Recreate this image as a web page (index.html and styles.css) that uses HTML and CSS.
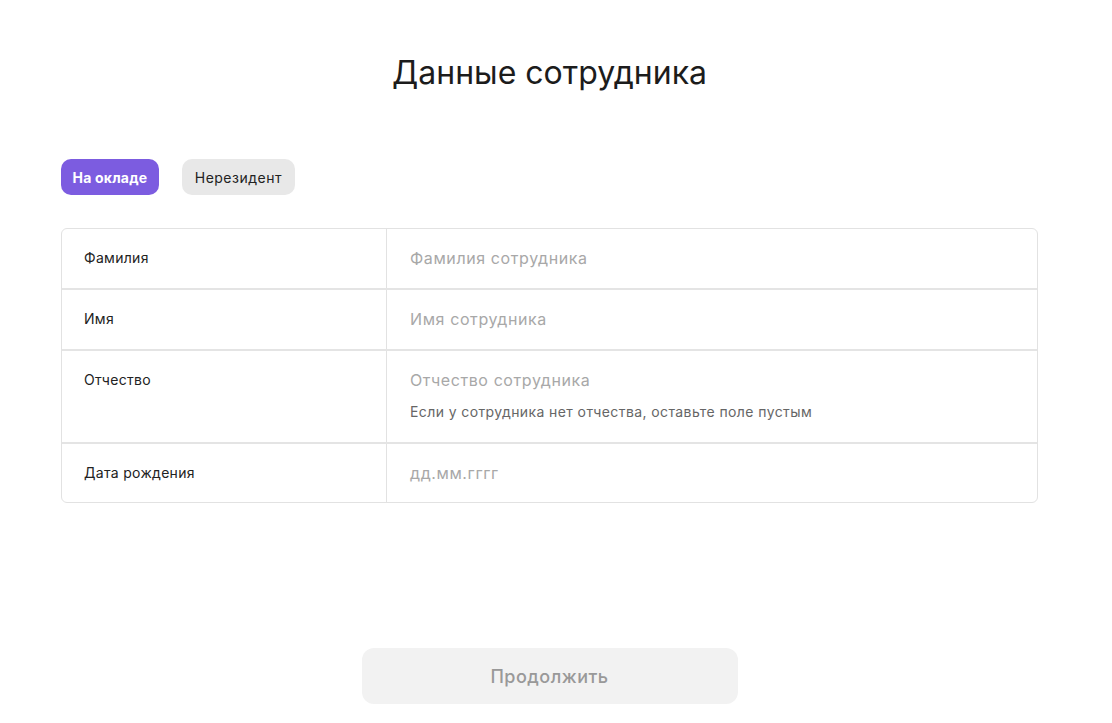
FILE: index.html
```html
<!DOCTYPE html>
<html lang="ru">
<head>
<meta charset="utf-8">
<link rel="stylesheet" href="styles.css">
</head>
<body>
<div class="page">
  <h1 class="title">Данные сотрудника</h1>
  <div class="tabs">
    <button class="tab tab-active">На окладе</button>
    <button class="tab">Нерезидент</button>
  </div>
  <div class="form">
    <div class="row">
      <div class="label">Фамилия</div>
      <div class="field"><div class="placeholder">Фамилия сотрудника</div></div>
    </div>
    <div class="row">
      <div class="label">Имя</div>
      <div class="field"><div class="placeholder">Имя сотрудника</div></div>
    </div>
    <div class="row">
      <div class="label">Отчество</div>
      <div class="field">
        <div class="placeholder">Отчество сотрудника</div>
        <div class="hint">Если у сотрудника нет отчества, оставьте поле пустым</div>
      </div>
    </div>
    <div class="row row-last">
      <div class="label">Дата рождения</div>
      <div class="field"><div class="placeholder">дд.мм.гггг</div></div>
    </div>
  </div>
  <div class="actions">
    <button class="continue">Продолжить</button>
  </div>
</div>
</body>
</html>
```

FILE: styles.css
```css
* { box-sizing: border-box; }
html, body { margin: 0; padding: 0; background: #fff; }
body { font-family: Inter, "Noto Sans", sans-serif; color: #222; }
.page { width: 1112px; height: 723px; padding: 0 74px 0 61px; display: flex; flex-direction: column; }
.title { margin: 51px 0 0; font-size: 32px; font-weight: 400; line-height: 44px; text-align: center; color: #1c1c1c; }
.tabs { display: flex; gap: 23px; margin-top: 64px; }
.tab { height: 36px; padding: 0 13px; border: none; border-radius: 10px; font-family: inherit; font-size: 14px; letter-spacing: 0.5px; background: #e8e8e8; color: #222; }
.tab-active { background: #7c5ce0; color: #fff; font-weight: 700; letter-spacing: 0.2px; padding: 0 11.5px; }
.form { margin-top: 33px; border: 1px solid #e2e2e2; border-radius: 6px; }
.row { display: flex; border-top: 2px solid #e4e4e4; }
.row:first-child { border-top: none; }
.label { width: 325px; flex: none; padding: 19px 22px; font-size: 14px; line-height: 20px; letter-spacing: 0.3px; border-right: 1px solid #e2e2e2; color: #222; }
.field { flex: 1; padding: 18px 23px 19px; }
.row-last .label { padding-bottom: 18px; }
.row-last .field { padding-bottom: 18px; }
.placeholder { font-size: 16px; line-height: 22px; letter-spacing: 0.6px; color: #a8a8a8; }
.hint { margin-top: 10px; font-size: 14px; line-height: 22px; letter-spacing: 0.4px; color: #666; }
.actions { margin-top: auto; margin-bottom: 19px; display: flex; justify-content: center; }
.continue { width: 376px; height: 56px; border: none; border-radius: 12px; background: #f2f2f2; color: #999; font-family: inherit; font-size: 18px; font-weight: 500; letter-spacing: 0.5px; }
```
